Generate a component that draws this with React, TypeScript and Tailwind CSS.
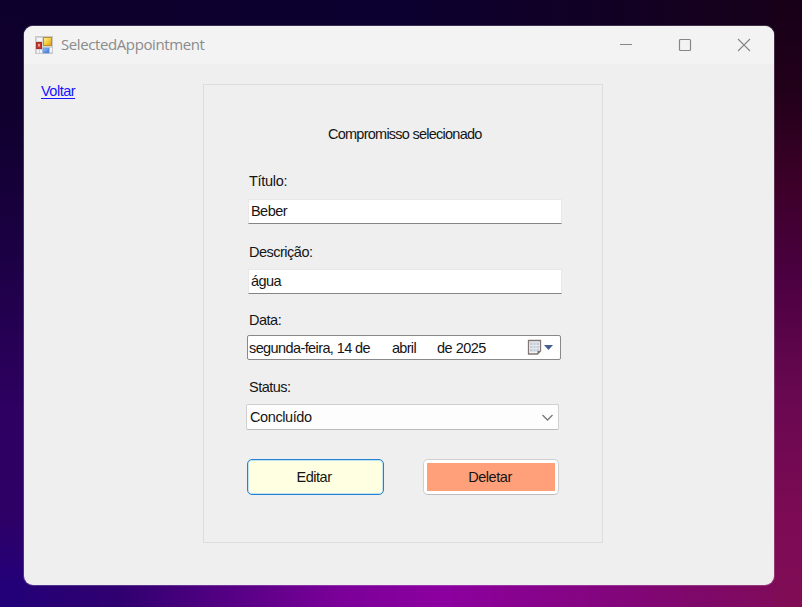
import type { ReactNode } from "react";

const form = "font-['Liberation_Sans',Arial,sans-serif] text-[14.5px] leading-[18px] text-[#151515]";

function Label({ children, className = "" }: { children: ReactNode; className?: string }) {
  return <label className={`ml-0.5 block whitespace-pre ${className}`}>{children}</label>;
}

function TextField({ value, className = "" }: { value: string; className?: string }) {
  return (
    <div className={`ml-px flex h-[25px] w-[314px] items-center border border-[#e8e8e8] border-b-[#858585] bg-white pb-px pl-0.5 whitespace-pre ${className}`}>
      <span className="tracking-[-0.55px]">{value}</span>
    </div>
  );
}

function FormIcon() {
  return (
    <svg className="-mt-px" width="18" height="18" viewBox="0 0 18 18">
      <defs>
        <linearGradient id="gold" x1="0" y1="0" x2="1" y2="1"><stop stopColor="#fff0a0" /><stop offset="0.5" stopColor="#f6cf45" /><stop offset="1" stopColor="#dc9c10" /></linearGradient>
        <linearGradient id="blue" x1="0" y1="0" x2="1" y2="1"><stop stopColor="#9cc6fa" /><stop offset="1" stopColor="#3570d0" /></linearGradient>
      </defs>
      <rect x="0.5" y="0.5" width="17" height="17" fill="#d2d3d6" stroke="#c9c9cc" />
      <path d="M2 2h5v3H2zM2 14h2v3H2zM5 14h2v3H5zM15 12h2v4h-2z" fill="#f5f5f8" />
      <rect x="1.5" y="6.5" width="5" height="6" fill="#c8372e" stroke="#a53028" />
      <rect x="3" y="8" width="2" height="2.5" fill="#f09c91" />
      <rect x="8.5" y="1.5" width="8" height="8" fill="url(#gold)" stroke="#c08f20" />
      <rect x="8" y="12" width="6" height="5" fill="url(#blue)" stroke="#5b8ddd" strokeWidth=".6" />
    </svg>
  );
}

export default function App() {
  return (
    <div className="h-[607px] w-[802px] overflow-hidden bg-[linear-gradient(to_bottom,#0e002c,#10002f_20%,#1c0044_42%,#2e0062_68%,#2e0066_85%,#240078_96%,#220078),linear-gradient(to_bottom,#170018,#22001a_15%,#3c0028_30%,#4a0040_45%,#680850_65%,#7c0a54_85%,#800c56),linear-gradient(to_right,#220078,#300070_15%,#7a0098_42%,#8c00a0_55%,#7e0868_88%,#800c56),linear-gradient(to_right,#0e002c,#0c0030_50%,#170018)] bg-[size:24px_607px,28px_607px,802px_40px,802px_567px] bg-[position:left_top,right_top,left_bottom,left_top] bg-no-repeat pt-[26px] pl-6">
      <main className="h-[559px] w-[750px] overflow-hidden rounded-[9px] bg-[#efefef] shadow-[0_0_0_1px_#ffffff30]">
        <header className="flex h-[38px] items-center bg-[#f3f3f3] pl-[11px]">
          <FormIcon />
          <h1 className="-mt-0.5 ml-2 font-['Open_Sans','Noto_Sans',sans-serif] text-[15px] leading-5 tracking-[-0.4px] text-[#8b8b8b]">SelectedAppointment</h1>
          <div className="mr-[23px] ml-auto flex gap-[45px] text-[#868686]">
            <svg width="14" height="14" viewBox="0 0 14 14" fill="none" stroke="currentColor"><path d="M1 6.5h12" /></svg>
            <svg width="14" height="14" viewBox="0 0 14 14" fill="none" stroke="currentColor" strokeWidth="1.2"><rect x="1.5" y="1.5" width="11" height="11" rx="1" /></svg>
            <svg width="14" height="14" viewBox="0 0 14 14" fill="none" stroke="currentColor" strokeWidth="1.1"><path d="m1 1 12 12M13 1 1 13" /></svg>
          </div>
        </header>
        <div className={`flex ${form}`}>
          <nav className="w-[179px] pt-[18px] pl-[17px]">
            <a className="tracking-[-0.5px] text-[#1414ff] underline underline-offset-2">Voltar</a>
          </nav>
          <section className="mt-5 h-[459px] w-[400px] border border-[#dddddd] pl-[43px]">
            <h2 className="mt-[40px] ml-[81px] tracking-[-0.75px] whitespace-pre">Compromisso selecionado</h2>
            <Label className="mt-[29px] tracking-[-0.3px]">Título:</Label>
            <TextField value="Beber" className="mt-[9px]" />
            <Label className="mt-[19px] tracking-[-0.5px]">Descrição:</Label>
            <TextField value="água" className="mt-2" />
            <Label className="mt-[17px] tracking-[-0.5px]">Data:</Label>
            <div className="mt-1.5 flex h-[25px] w-[314px] items-center rounded-[2px] border border-[#898989] bg-white pl-px whitespace-pre">
              <span className="w-[143px] tracking-[-0.6px]">segunda-feira, 14 de</span>
              <span className="w-[45px] tracking-[-0.7px]">abril</span>
              <span className="w-[89px] tracking-[-0.5px]">de 2025</span>
              <svg width="28" height="17" viewBox="0 0 28 17">
                <path d="M2.5 1.5h12v10.500l-3 3h-9z" fill="#f4f5f7" stroke="#837774" strokeWidth="1.3" />
                <path d="M4 3.500h9v9H4z" fill="#c4ccd8" />
                <path d="M4 6.5h9M4 9.5h9M7 4v8M10 4v8" stroke="#e4e9ef" />
                <path d="M11.500 15v-3h3z" fill="#77706f" />
                <path d="M18 6h9l-4.500 5z" fill="#465f8e" />
              </svg>
            </div>
            <Label className="mt-[18px] tracking-[-0.5px]">Status:</Label>
            <div className="-ml-px mt-2 flex h-[26px] w-[313px] items-center rounded-[2px] border border-[#d0d0d0] border-b-[#bbbbbb] bg-[#fdfdfd] pr-1 pl-[3px]">
              <span className="tracking-[-0.4px]">Concluído</span>
              <svg className="ml-auto" width="13" height="9" viewBox="0 0 13 9" fill="none" stroke="#777" strokeWidth="1.3"><path d="m1.5 2 5 5 5-5" /></svg>
            </div>
            <div className="mt-[29px] flex gap-[39px]">
              <button className="h-9 w-[137px] rounded-[5px] border border-[#2382d2] bg-[#ffffe1] pr-[3px] tracking-[-0.45px] shadow-[inset_0_0_0_1px_#c4e2ee]">Editar</button>
              <button className="h-9 w-[136px] rounded-[5px] border border-[#d0d0d0] border-b-[#bcbcbc] bg-white p-[3px] tracking-[-0.45px]">
                <span className="flex h-full items-center justify-center bg-[#ffa07a] pr-0.5">Deletar</span>
              </button>
            </div>
          </section>
        </div>
      </main>
    </div>
  );
}
